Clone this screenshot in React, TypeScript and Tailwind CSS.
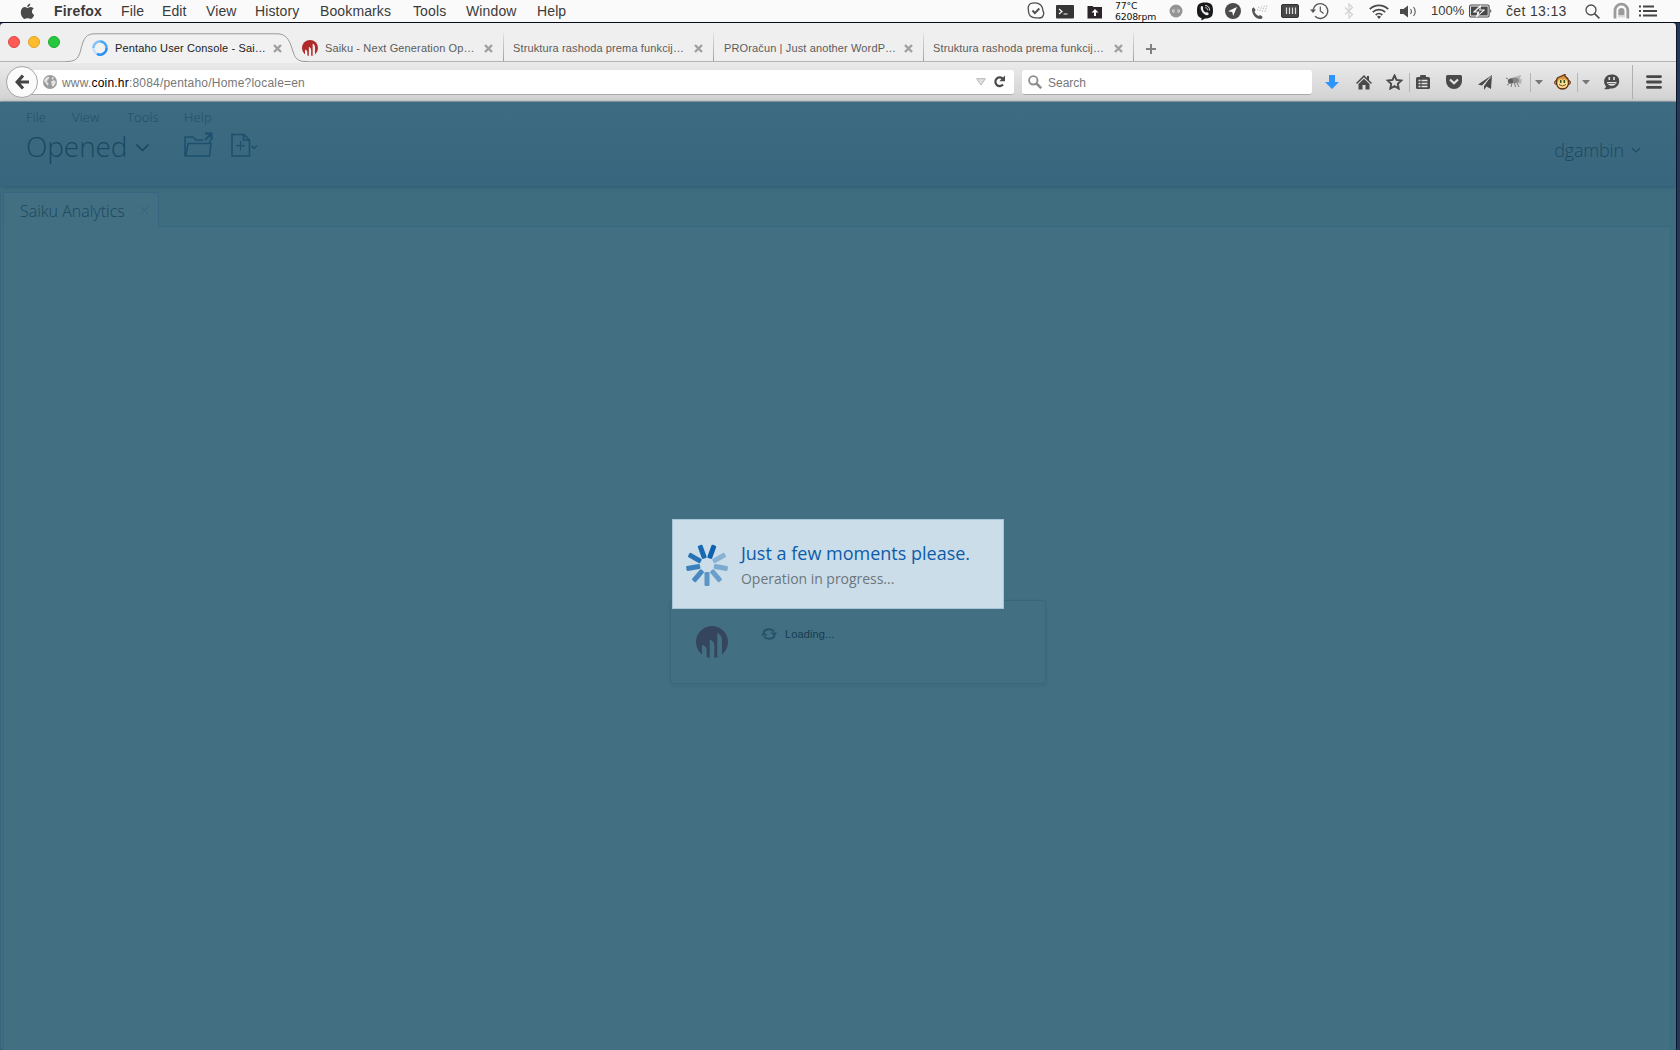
import type { ReactNode } from "react";
import clsx from "clsx";

const menuItems = [
  { label: "File", width: "w-[41px]" },
  { label: "Edit", width: "w-[44px]" },
  { label: "View", width: "w-[49px]" },
  { label: "History", width: "w-[65px]" },
  { label: "Bookmarks", width: "w-[93px]" },
  { label: "Tools", width: "w-[53px]" },
  { label: "Window", width: "w-[71px]" },
  { label: "Help", width: "w-[40px]" },
];

const appMenu = [
  { label: "File", width: "w-[46px]" },
  { label: "View", width: "w-[55px]" },
  { label: "Tools", width: "w-[57px]" },
  { label: "Help", width: "w-[40px]" },
];

const backgroundTabs = [
  { title: "Saiku - Next Generation Op…", saiku: true, width: "w-[200px]" },
  { title: "Struktura rashoda prema funkcij…", saiku: false, width: "w-[210px] pl-[9px]" },
  { title: "PROračun | Just another WordP…", saiku: false, width: "w-[210px] pl-[10px]" },
  { title: "Struktura rashoda prema funkcij…", saiku: false, width: "w-[210px] pl-[9px]" },
];

const spinnerBlades = [
  { angle: 20, opacity: 1 },
  { angle: 60, opacity: 0.35 },
  { angle: 100, opacity: 0.42 },
  { angle: 140, opacity: 0.5 },
  { angle: 180, opacity: 0.58 },
  { angle: 220, opacity: 0.68 },
  { angle: 260, opacity: 0.76 },
  { angle: 300, opacity: 0.86 },
  { angle: 340, opacity: 0.94 },
];

// Centres a drawing inside a fixed slot so the bars keep their rhythm
function Slot({ width, children }: { width: string; children: ReactNode }) {
  return <div className={clsx("flex h-full shrink-0 items-center justify-center", width)}>{children}</div>;
}

function SaikuLogo({ size, fill, bars }: { size: number; fill: string; bars: string }) {
  return (
    <svg width={size} height={size} viewBox="0 0 32 32" className="shrink-0">
      <circle cx="16" cy="16" r="16" fill={fill} />
      <path
        d="M6 29V19q4.200.5 4.700 5V32H6zM13.700 32V13.500q4.400 1.500 4.600 6V32h-4.600zM21.300 31V7q4.200 1.500 4.600 6.500V29.500z"
        fill={bars}
      />
    </svg>
  );
}

function TabClose() {
  return (
    <svg width="9" height="9" viewBox="0 0 9 9" className="shrink-0">
      <path d="M1 1l7 7M8 1L1 8" stroke="#a0a0a0" strokeWidth="2.400" />
      <path d="M4.500 0v2M4.500 7v2M0 4.500h2M7 4.500h2" stroke="#efefef" strokeWidth="1" />
    </svg>
  );
}

function MenuBar() {
  return (
    <div className="flex h-[23px] items-start border-b border-[#060b18] bg-[#fafafa] text-[14px] leading-[22px] text-[#3a3a3a]">
      <div className="flex h-[22px] w-[54px] items-center pl-[20px]">
        <svg width="15" height="17" viewBox="0 0 15 17" fill="#4a4a4a">
          <path d="M10.300.5c.1 1.900-1.500 3.500-3.100 3.500C7 2.300 8.600.7 10.300.5zM7.400 4.900c.7 0 1.600-1 3.300-1 1.300.1 2.400.8 3 1.700-2.600 1.600-2.200 5.200.5 6.300-.6 1.600-1.900 4-3.400 4-1.200 0-1.600-.7-3.100-.7s-2 .7-3.100.7C2.900 15.900.8 12.500.8 9.300c0-3.400 2.100-5.200 4.200-5.200 1.200 0 1.900.8 2.400.8z" />
        </svg>
      </div>
      <span className="w-[67px] font-bold tracking-[0.200px]">Firefox</span>
      {menuItems.map((item) => (
        <span key={item.label} className={clsx("tracking-[0.120px]", item.width)}>
          {item.label}
        </span>
      ))}

      <div className="ml-auto flex h-[22px] items-center">
        <Slot width="w-[22px]">
          <svg width="18" height="18" viewBox="0 0 18 18" fill="none" stroke="#4d4d4d" strokeWidth="1.300">
            <path d="M5.500 1.200C8 .4 15.500.5 16 9c1.500 2 .5 7-3.500 7-1.500 0-1.500-.3-3-.2C4 16 1.300 13 1.500 8.500.6 5 1.500 1.500 5.500 1.200z" />
            <path d="M5.500 8.500l2.400 2.600 4.400-4.600" strokeWidth="1.900" />
          </svg>
        </Slot>
        <Slot width="w-[36px]">
          <svg width="18" height="14" viewBox="0 0 18 14" className="mt-px">
            <rect width="18" height="13.500" rx="1" fill="#353535" />
            <path d="M3 4l3 2.500L3 9M7.500 9h4" fill="none" stroke="#fff" strokeWidth="1.200" />
          </svg>
        </Slot>
        <Slot width="w-[23px]">
          <svg width="16" height="14" viewBox="0 0 16 14" className="mt-px">
            <path d="M.5 2V1h5l1 1H15v11.500H.5z" fill="#2b252b" />
            <path d="M8 4l3.500 3.500H9v3.500H7V7.500H4.500z" fill="#fff" />
          </svg>
        </Slot>
        <div className="ml-[9px] flex h-[22px] w-[46px] flex-col font-['Lucida_Grande','DejaVu_Sans',sans-serif] text-[9.300px] leading-[12px] text-[#111]">
          <span className="tracking-[-0.200px]">77°C</span>
          <span className="-mt-px tracking-[-0.200px]">6208rpm</span>
        </div>
        <Slot width="w-[30px]">
          <svg width="14" height="14" viewBox="0 0 14 14">
            <circle cx="7" cy="7" r="6.500" fill="#949494" />
            <path d="M3 7a1.700 1.700 0 0 1 3.400 0 1.700 1.700 0 0 1-3.400 0M7.600 7A1.700 1.700 0 0 1 11 7a1.700 1.700 0 0 1-3.400 0" fill="#ddd" />
            <path d="M4.300 7h5.500" stroke="#8b8b8b" />
          </svg>
        </Slot>
        <Slot width="w-[28px]">
          <svg width="18" height="19" viewBox="0 0 18 19">
            <path d="M9 .5c6 0 8 2 8 8s-2 8-8 8L5.500 18.500v-2.400C2 15 1 13 1 8.500c0-6 2-8 8-8z" fill="#191a1c" />
            <path d="M5 4.500c2-1.500 2.500 1.500 2 2.500.3 1.800 1.500 3 3 3.500 1-1 3.500.5 2.500 2C10 15.500 3 8 5 4.500z" fill="#eee" />
            <path d="M9 3.500c3 0 4.700 2 4.700 5M9.300 5.700c1.700.1 2.500 1.200 2.500 2.700" fill="none" stroke="#eee" strokeWidth=".9" />
          </svg>
        </Slot>
        <Slot width="w-[27px]">
          <svg width="16" height="16" viewBox="0 0 16 16">
            <circle cx="8" cy="8" r="8" fill="#4b4b4b" />
            <path d="M12 4L3 8.200l4.300.8.800 4z" fill="#fff" />
          </svg>
        </Slot>
        <Slot width="w-[28px]">
          <svg width="18" height="18" viewBox="0 0 18 18" fill="none">
            <path d="M1 6.800l1.800-1.500 1.900 2.900-1.200 1.300c.7 2 2.300 3.600 4.300 4.600l1.300-1.100 2.700 1.900-1.500 2.100C5.500 18 .5 12.500 1 6.800z" fill="#555" />
            <path d="M7.500 10V6.500M10 10V4.500M12.500 9.500V3.200M15 9V2" stroke="#bbb" strokeDasharray="1.500 1" transform="rotate(20 12 6)" />
          </svg>
        </Slot>
        <Slot width="w-[31px]">
          <svg width="18" height="14" viewBox="0 0 18 14">
            <rect x=".5" y=".5" width="17" height="13" rx="1.500" fill="#484848" stroke="#333" />
            <path d="M5.500 3.500v6.500M8.500 3.500v6.500M11.500 3.500v6.500M14.500 3.500v6.500" stroke="#ddd" strokeWidth="1.200" />
          </svg>
        </Slot>
        <Slot width="w-[29px]">
          <svg width="19" height="18" viewBox="0 0 19 18" fill="none" stroke="#565656">
            <path d="M3 8a7.400 7.400 0 1 1 2 6.200" strokeWidth="1.400" />
            <path d="M10.300 4.500V9l3.300 2.500" strokeWidth="1.200" />
            <path d="M0 7.500h6L3 11z" fill="#565656" stroke="none" />
          </svg>
        </Slot>
        <Slot width="w-[30px]">
          <svg width="10" height="16" viewBox="0 0 10 16" fill="none" stroke="#d2d2d2" strokeWidth="1.200">
            <path d="M1 4.500l7.500 7L5 15V1l3.500 3.500-7.500 7" />
          </svg>
        </Slot>
        <Slot width="w-[30px]">
          <svg width="20" height="15" viewBox="0 0 20 15" fill="none" stroke="#4a4a4a" strokeWidth="1.800">
            <path d="M.8 5.200a13 13 0 0 1 18.400 0M3.800 8.200a8.800 8.800 0 0 1 12.400 0M6.700 11a4.700 4.700 0 0 1 6.600 0" />
            <path d="M10 15l-2-2.300a3 3 0 0 1 4 0z" fill="#4a4a4a" stroke="none" />
          </svg>
        </Slot>
        <Slot width="w-[29px]">
          <svg width="17" height="13" viewBox="0 0 17 13" fill="none" stroke="#666" strokeWidth="1.200">
            <path d="M0 4h3.500L8 .5v12L3.500 9H0z" fill="#4a4a4a" stroke="none" />
            <path d="M10.500 4q1.800 2.500 0 5M13.500 2q3.500 4.500 0 9" />
          </svg>
        </Slot>
        <span className="ml-[8px] w-[38px] text-[13px] leading-[20px]">100%</span>
        <svg width="24" height="14" viewBox="0 0 24 14">
          <rect x=".6" y="1" width="19.500" height="12" rx="1.500" fill="none" stroke="#444" strokeWidth="1.100" />
          <rect x="2" y="2.500" width="16.700" height="9" fill="#484848" />
          <path d="M11.500 1.500L4.500 8h4.600l-1.600 4.800L15.500 6h-4.700z" fill="#fff" stroke="#fafafa" />
          <path d="M10.900 3.500L6.500 7.400h4l-1 3L13.800 6.600H10z" fill="#444" />
          <path d="M21.300 5q2.200 2 0 4z" fill="#444" />
        </svg>
        <span className="ml-[13px] w-[73px] whitespace-nowrap tracking-[0.350px]">čet 13:13</span>
        <Slot width="w-[26px]">
          <svg width="15" height="15" viewBox="0 0 15 15" fill="none" stroke="#4d4d4d">
            <circle cx="6" cy="6" r="5" strokeWidth="1.300" />
            <path d="M9.600 9.600l4.800 4.800" strokeWidth="1.600" />
          </svg>
        </Slot>
        <Slot width="w-[32px]">
          <svg width="17" height="17" viewBox="0 0 17 17" className="-mt-[2px]" fill="none" stroke="#9b9b9b">
            <path d="M2 16.500V8.500a6.400 6.400 0 0 1 12.800 0v8" strokeWidth="2.800" />
            <path d="M5.300 13.500V9a3.100 3.100 0 0 1 6.200 0v4.500z" fill="#9b9b9b" stroke="none" />
            <path d="M5 15.500v-2h7v2" fill="#ddd" stroke="none" />
          </svg>
        </Slot>
        <svg width="18" height="12" viewBox="0 0 18 12" className="mr-[23px] ml-[2px]" stroke="#454545" strokeWidth="2">
          <path d="M0 1.500h2M0 6h2M0 10.500h2M4 1.500h11M4 6h14M4 10.500h14" />
        </svg>
      </div>
    </div>
  );
}

function TabStrip() {
  return (
    <div className="relative flex h-[39px] border-b border-[#b3b3b3] bg-[#efefef] text-[11px] tracking-[0.130px] text-[#5c5c5c]">
      <div className="flex w-[74px] items-center gap-[8px] pl-[8px] pb-px">
        <span className="size-[12px] rounded-full border border-[#e2463f] bg-[#fc5b57]" />
        <span className="size-[12px] rounded-full border border-[#e1a325] bg-[#fdbc2e]" />
        <span className="size-[12px] rounded-full border border-[#1aab29] bg-[#27c83f]" />
      </div>
      <div className="relative flex w-[230px] items-center pt-[12px] pl-[18px]">
        <svg width="242" height="30" viewBox="0 0 242 30" className="absolute top-[10px] left-[-8px]">
          <path
            d="M0 28.500C9 28.500 12 26.500 14.500 18 17.500 5 20 .8 29 .8H211C219 .8 223 5 226.500 17 229 26 232 28.500 240 28.500H242V30H0z"
            fill="#f1f1f1"
          />
          <path
            d="M0 28.500C9 28.500 12 26.500 14.500 18 17.500 5 20 .8 29 .8H211C219 .8 223 5 226.500 17 229 26 232 28.500 240 28.500H242"
            fill="none"
            stroke="#999"
          />
        </svg>
        <svg width="16" height="16" viewBox="0 0 16 16" className="relative" fill="none" strokeWidth="2.400">
          <circle cx="8" cy="8" r="6.600" stroke="#c3e1fb" />
          <path d="M1.400 8A6.600 6.600 0 0 1 8 1.400" stroke="#83c0f5" />
          <path d="M14.600 8A6.600 6.600 0 0 1 5 13.900" stroke="#2792f0" />
          <path d="M8 1.400A6.600 6.600 0 0 1 14.600 8" stroke="#4ba7f5" />
        </svg>
        <span className="relative ml-[7px] w-[158px] whitespace-nowrap text-[#222]">Pentaho User Console - Sai…</span>
        <div className="relative">
          <TabClose />
        </div>
      </div>
      {backgroundTabs.map((tab, index) => (
        <div key={index} className={clsx("relative flex items-center pt-[12px]", tab.width)}>
          {tab.saiku && (
            <div className="-ml-[2px] mr-[7px]">
              <SaikuLogo size={16} fill="#b02a2a" bars="#efefef" />
            </div>
          )}
          <span className="flex-1 whitespace-nowrap">{tab.title}</span>
          <TabClose />
          <span className="ml-[10px] -mt-[2px] h-[28px] w-px bg-gradient-to-b from-[#e3e3e3] to-[#a0a0a0]" />
        </div>
      ))}
      <svg width="10" height="10" viewBox="0 0 10 10" className="mt-[21px] ml-[12px]" stroke="#808080" strokeWidth="2">
        <path d="M5 0v10M0 5h10" />
      </svg>
    </div>
  );
}

function Divider() {
  return <span className="h-[19px] w-px bg-[#b4b4b4]" />;
}

function Caret() {
  return (
    <svg width="8" height="5" viewBox="0 0 8 5">
      <path d="M0 0h8L4 4.500z" fill="#777" />
    </svg>
  );
}

function Toolbar() {
  return (
    <div className="flex h-[40px] items-center border-b border-[#a2a2a2] bg-gradient-to-b from-[#eaeaea] to-[#d2d2d2] pt-px text-[12px] text-[#777]">
      <div className="z-10 ml-[6px] flex size-[32px] shrink-0 items-center justify-center rounded-full border border-[#a5a5a5] bg-[#fbfbfb]">
        <svg width="14" height="16" viewBox="0 0 14 16" fill="none" stroke="#444" strokeWidth="3.200">
          <path d="M8 1.500L2.200 8 8 14.500M2.500 8H14" />
        </svg>
      </div>
      <div className="-ml-[14px] flex h-[25px] w-[990px] items-center rounded-r-[3px] border-b border-[#aaa] bg-white pl-[19px]">
        <svg width="14" height="14" viewBox="0 0 14 14" className="mr-[5px]">
          <circle cx="7" cy="7" r="7" fill="#9b9b9b" />
          <path d="M2 3.500l3-2 1.500 1L5 5 3.500 6.500l2 2L5 11 2.500 8 1 6zM9 2l2 .8-1 2-1.500-1zM8 6.500l3-1.500 2 2-2 4-2 .5-.5-3z" fill="#e2e2e2" />
        </svg>
        <span className="pt-[2px] tracking-[0.200px]">
          www.<span className="text-black">coin.hr</span>:8084/pentaho/Home?locale=en
        </span>
        <svg width="10" height="8" viewBox="0 0 10 8" className="ml-auto">
          <path d="M.7.700h8.600L5 7z" fill="#e2e2e2" stroke="#b5b5b5" />
        </svg>
        <svg width="13" height="13" viewBox="0 0 13 13" className="mr-[8px] ml-[7px]">
          <path d="M9.500 3.500A4.300 4.300 0 1 0 10 9.500" fill="none" stroke="#4a4a4a" strokeWidth="2.200" />
          <path d="M12 .5v5.800H6.300z" fill="#4a4a4a" />
        </svg>
      </div>
      <div className="ml-[8px] flex h-[25px] w-[290px] items-center rounded-[3px] border-b border-[#aaa] bg-white pl-[6px]">
        <svg width="14" height="14" viewBox="0 0 14 14" className="mr-[6px]" fill="none" stroke="#8d8d8d">
          <circle cx="5.300" cy="5.300" r="4.200" strokeWidth="1.900" />
          <path d="M8.500 8.500l4.700 4.700" strokeWidth="2.500" />
        </svg>
        <span className="pt-[2px]">Search</span>
      </div>
      <Slot width="w-[40px]">
        <svg width="14" height="14" viewBox="0 0 14 14">
          <path d="M4 0h6v7h4l-7 7-7-7h4z" fill="#2d94fb" />
        </svg>
      </Slot>
      <Slot width="w-[24px]">
        <svg width="16" height="15" viewBox="0 0 16 15" fill="#4a4a4a">
          <path d="M8 0l3 3V1h2v4l3 3-1 1-7-6.700L1 9 0 8z" />
          <path d="M2.500 9L8 3.800 13.500 9v5.500h-4V10h-3v4.500h-4z" />
        </svg>
      </Slot>
      <span className="w-[4px]" />
      <Slot width="w-[29px]">
        <svg width="17" height="16" viewBox="0 0 17 16">
          <path d="M8.500 1.500l2 4.400 4.800.6-3.500 3.300.9 4.800-4.200-2.400-4.200 2.400.9-4.800L1.700 6.500l4.800-.6z" fill="none" stroke="#4a4a4a" strokeWidth="1.900" />
        </svg>
      </Slot>
      <Divider />
      <Slot width="w-[26px]">
        <svg width="14" height="15" viewBox="0 0 14 15">
          <rect y="2" width="14" height="12" rx="1.500" fill="#4a4a4a" />
          <rect x="4" width="6" height="4" rx="1" fill="#4a4a4a" />
          <path d="M2.500 5.500h2M5.500 5.500h6M2.500 8.500h2M5.500 8.500h6M2.500 11.500h2M5.500 11.500h6" stroke="#e5e5e5" strokeWidth="1.300" />
        </svg>
      </Slot>
      <Slot width="w-[35px]">
        <svg width="16" height="14" viewBox="0 0 16 14">
          <path d="M1.500 0h13Q16 0 16 1.500V6a8 8 0 0 1-16 0V1.500Q0 0 1.500 0z" fill="#4a4a4a" />
          <path d="M4 4.500L8 8.300l4-3.800" fill="none" stroke="#e2e2e2" strokeWidth="2.200" />
        </svg>
      </Slot>
      <Slot width="w-[28px]">
        <svg width="15" height="15" viewBox="0 0 15 15">
          <path d="M14 0L0 9.500l4 1L13 1 6 11v4l2.500-3.500L13 14z" fill="#4a4a4a" />
          <path d="M13 1.500L4.800 10.500" stroke="#ddd" strokeWidth=".8" />
        </svg>
      </Slot>
      <Slot width="w-[31px]">
        <svg width="17" height="14" viewBox="0 0 17 14">
          <path d="M5 3l10-3-1 4-5 2zM9 5l7-1-1 5-5-1z" fill="#b5b5b5" />
          <ellipse cx="8" cy="5.500" rx="5" ry="2.700" fill="#858585" />
          <circle cx="4.500" cy="6" r="2.600" fill="#5d5d5d" />
          <path d="M4 8l-3 2M6 8l-1 4M8.500 8l1 4M11 8l2 4M2 4L0 3" stroke="#777" />
        </svg>
      </Slot>
      <Divider />
      <Slot width="w-[16px]">
        <Caret />
      </Slot>
      <Slot width="w-[30px]">
        <svg width="17" height="16" viewBox="0 0 17 16">
          <circle cx="2.500" cy="8.500" r="2" fill="#e8aa55" stroke="#653818" />
          <circle cx="14.500" cy="8.500" r="2" fill="#e8aa55" stroke="#653818" />
          <path d="M4 3.500Q8 2 11 .5 10.500 2 12 3q3 2 2.700 6-1 6-6.200 6T2.500 9Q2 5 4 3.500z" fill="#dc963f" stroke="#5d3012" strokeWidth="1.300" />
          <path d="M4 7q2-3 4.500-1Q11 4 13 7q2 7-4.500 7T4 7z" fill="#fbe196" />
          <path d="M6.700 6v3M10.300 6v3" stroke="#35501d" strokeWidth="1.600" />
          <path d="M5 10.500q3.500 3 7 0" fill="none" stroke="#7a4a20" />
        </svg>
      </Slot>
      <Divider />
      <Slot width="w-[16px]">
        <Caret />
      </Slot>
      <Slot width="w-[34px]">
        <svg width="17" height="16" viewBox="0 0 17 16">
          <path d="M8.700.5c4.500 0 7.500 2.500 7.500 6.500 0 5-4.500 8-9 7.500-2 1-4 1-6.200.5 1.300-.7 1.900-1.500 2-2.800C-1 8 1.500.5 8.700.5z" fill="#4a4a4a" />
          <path d="M6.300 3v3M11 3v3" stroke="#e2e2e2" strokeWidth="1.600" />
          <path d="M3.800 8h10q-1 3.700-5 3.700T3.800 8z" fill="#e2e2e2" />
          <path d="M5 9.500h7.500" stroke="#4a4a4a" strokeWidth=".7" />
        </svg>
      </Slot>
      <span className="ml-[4px] h-[34px] w-px bg-[#b0b0b0]" />
      <svg width="16" height="14" viewBox="0 0 16 14" className="ml-[13px]" stroke="#484848" strokeWidth="2.900" strokeLinecap="round">
        <path d="M1.500 1.600h13M1.500 7h13M1.500 12.400h13" />
      </svg>
    </div>
  );
}

function ConsoleHeader() {
  return (
    <header className="flex h-[84px] justify-between bg-gradient-to-b from-[#3d6b81] to-[#38667e] font-['Open_Sans',sans-serif] font-light text-[#1a4860] shadow-[0_1px_4px_#2d5a70]">
      <div className="pl-[26px]">
        <div className="flex pt-[6px] text-[13px] leading-[18px] tracking-[0.150px] text-[#1f4e66]">
          {appMenu.map((item) => (
            <span key={item.label} className={item.width}>
              {item.label}
            </span>
          ))}
        </div>
        <div className="flex h-[42px] items-center text-[28px]">
          <span className="-mt-[2px] w-[109px] tracking-[-0.100px]">Opened</span>
          <svg width="15" height="10" viewBox="0 0 15 10" className="mt-px" fill="none" stroke="#1b4961" strokeWidth="1.700">
            <path d="M1.500 1.500L7.500 7.500 13.500 1.500" />
          </svg>
          <svg width="30" height="27" viewBox="0 0 30 27" className="-mt-[5px] ml-[33px]" fill="none" stroke="#1c506e">
            <path d="M2 25.500V6h8l3 3h7M2 25h24.500l1.500-12.500H5L2.800 25M27 12V9" strokeWidth="1.600" />
            <path d="M22 9l6-6M22 2.500h6.500V9" strokeWidth="2" />
          </svg>
          <svg width="28" height="25" viewBox="0 0 28 25" className="-mt-[4px] ml-[17px]" fill="none" stroke="#1c506e">
            <path d="M2 1.500h12l5.500 5.500v16H2zM13.500 1.500V7H19" strokeWidth="1.600" />
            <path d="M10.500 8v9.500M6 12.700h9" strokeWidth="1.200" />
            <path d="M21.500 12.700l2.700 2.700 2.700-2.700" strokeWidth="1.400" />
          </svg>
        </div>
      </div>
      <div className="flex items-center gap-[7px] pt-[12px] pr-[35px] text-[18px] tracking-[-0.150px]">
        dgambin
        <svg width="10" height="7" viewBox="0 0 10 7" fill="none" stroke="#1f4d65" strokeWidth="1.200">
          <path d="M.8 1l4.200 4L9.200 1" />
        </svg>
      </div>
    </header>
  );
}

function LoadingPanel() {
  return (
    <div className="absolute top-[498px] left-[670px] flex h-[84px] w-[376px] rounded-[3px] border border-[#3b677b] pt-[25px] pl-[25px] shadow-[0_1px_3px_rgba(25,72,96,0.15)]">
      <SaikuLogo size={32} fill="#35455e" bars="#436f82" />
      <div className="ml-[33px] flex h-[16px] items-center text-[11px] tracking-[0.120px] text-[#153b50]">
        <svg width="16" height="14" viewBox="0 0 16 14" className="mr-[8px]" fill="none" stroke="#25536a" strokeWidth="2">
          <path d="M2.500 5A6 5 0 0 1 13 4.500M13.500 9A6 5 0 0 1 3 9.500" />
          <path d="M9.500 5.500h6.500L13.500 9.500zM0 8.500h6.500L2.800 4.500z" fill="#25536a" stroke="none" />
        </svg>
        Loading...
      </div>
    </div>
  );
}

function ProgressDialog() {
  return (
    <div className="absolute top-[417px] left-[672px] flex h-[90px] w-[332px] border border-[#a6c5d6] bg-[#cbdde9] font-['Open_Sans',sans-serif]">
      <svg width="42" height="42" viewBox="-21 -21 42 42" className="mt-[24px] ml-[13px]">
        {spinnerBlades.map((blade) => (
          <rect
            key={blade.angle}
            x="-2.500"
            y="-21"
            width="5"
            height="14"
            rx="1.200"
            fill="#0c62ad"
            opacity={blade.opacity}
            transform={`rotate(${blade.angle})`}
          />
        ))}
      </svg>
      <div className="ml-[13px] pt-[21px]">
        <p className="text-[18px] leading-[25px] text-[#0d5cab]">Just a few moments please.</p>
        <p className="text-[14px] leading-[26px] tracking-[-0.030px] text-[#6d767b]">Operation in progress...</p>
      </div>
    </div>
  );
}

function PentahoConsole() {
  return (
    <main className="relative flex flex-1 flex-col bg-[#3f6d80]">
      <ConsoleHeader />
      <div className="mt-[6px] mr-[5px] flex flex-1 flex-col border-l border-[#37657d]">
        <div className="flex h-[35px]">
          <div className="z-10 ml-[2px] flex w-[156px] items-center rounded-t-[2px] border border-b-0 border-[#376780] bg-[#436f82] pt-[2px] pl-[16px] font-['Open_Sans',sans-serif] text-[16px] font-light text-[#194860]">
            <span className="w-[120px] whitespace-nowrap">Saiku Analytics</span>
            <svg width="9" height="9" viewBox="0 0 9 9" className="-mt-px" stroke="#34647b">
              <path d="M.5.500l8 8M8.500.500l-8 8" />
            </svg>
          </div>
          <div className="flex-1 border-b border-[#376780]" />
        </div>
        <div className="ml-[2px] flex-1 border-r border-l border-[#396980] bg-[#436f82]" />
      </div>
      <LoadingPanel />
      <ProgressDialog />
    </main>
  );
}

export default function App() {
  return (
    <div className="flex h-[1050px] w-[1680px] flex-col overflow-hidden bg-[#24375c] font-['Liberation_Sans',Arial,sans-serif]">
      <MenuBar />
      <div className="flex w-[1677px] flex-1 flex-col overflow-hidden rounded-t-[4px] rounded-b-[2px] border-r border-[#0d1626]">
        <TabStrip />
        <Toolbar />
        <PentahoConsole />
      </div>
    </div>
  );
}
